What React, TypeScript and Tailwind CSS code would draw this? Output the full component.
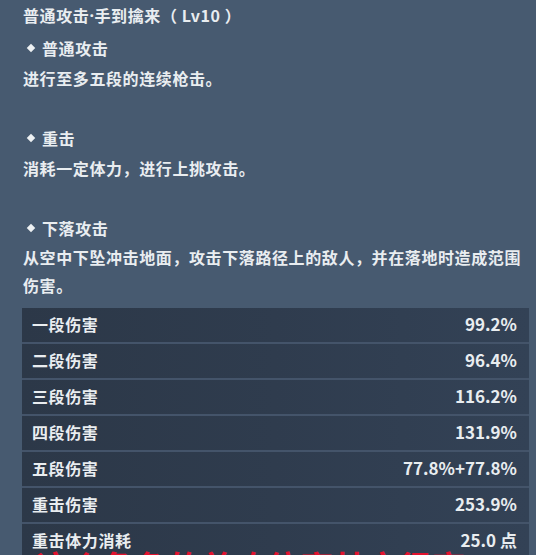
import React from "react";

const rows = [
  ["一段伤害", "99.2%"],
  ["二段伤害", "96.4%"],
  ["三段伤害", "116.2%"],
  ["四段伤害", "131.9%"],
  ["五段伤害", "77.8%+77.8%"],
  ["重击伤害", "253.9%"],
  ["重击体力消耗", "25.0 点"],
];

function Heading({ children }: { children: React.ReactNode }) {
  return (
    <div className="flex h-[30px] items-center">
      <span className="ml-[5px] mr-[8px] h-[6px] w-[6px] rotate-45 bg-[#eef1f3]"></span>
      <span>{children}</span>
    </div>
  );
}

function Line({ children }: { children: React.ReactNode }) {
  return <div className="flex h-[30px] items-center">{children}</div>;
}

export default function App() {
  return (
    <div
      className="relative h-[555px] w-[536px] overflow-hidden bg-[#475a70] text-[#e9edf0]"
      style={{ fontFamily: '"Noto Sans CJK SC", "Noto Sans", sans-serif' }}>
      <div className="pl-[23px] text-[16px] font-bold tracking-[0.6px]">
        <Line>
          普通攻击<span style={{ fontFamily: '"Noto Sans", sans-serif' }}>·</span>手到擒来（ Lv10 ）
        </Line>
        <div className="mt-[3px]">
          <Heading>普通攻击</Heading>
          <Line>进行至多五段的连续枪击。</Line>
          <div className="h-[30px]"></div>
          <Heading>重击</Heading>
          <Line>消耗一定体力，进行上挑攻击。</Line>
          <div className="h-[30px]"></div>
          <Heading>下落攻击</Heading>
          <p className="leading-[28px]">
            从空中下坠冲击地面，攻击下落路径上的敌人，并在落地时造成范围
            <br />
            伤害。
          </p>
        </div>
      </div>

      <div className="ml-[22px] mt-[9px] flex w-[507px] flex-col gap-[2px] bg-[#44546a]">
        {rows.map(([label, value]) => (
          <div
            key={label}
            className="flex h-[34px] items-center justify-between bg-gradient-to-r from-[#2c3848] via-[#2f3c4e] to-[#334256] pb-[3px] pl-[10px] pr-[12px] text-[16px] font-bold">
            <span className="tracking-[0.6px]">{label}</span>
            <span className="text-[17px]">{value}</span>
          </div>
        ))}
      </div>

      <div className="absolute left-[36px] top-[550px] whitespace-nowrap text-[33px] font-bold leading-none text-[#e3122d]">
        这个角色的普攻倍率其实很高
      </div>
    </div>
  );
}
